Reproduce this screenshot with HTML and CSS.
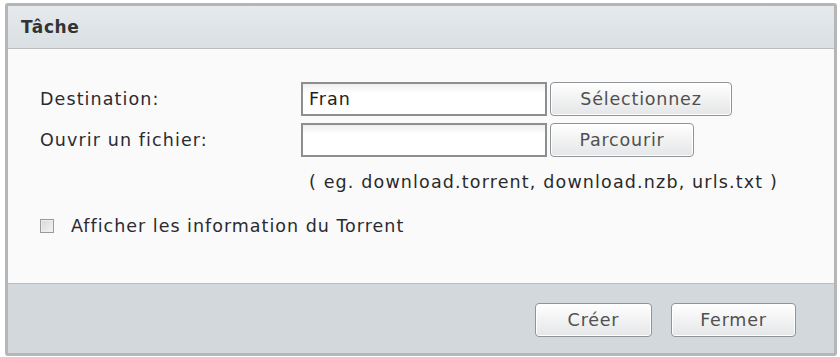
FILE: index.html
```html
<!DOCTYPE html>
<html lang="fr">
<head>
<meta charset="utf-8">
<link rel="stylesheet" href="styles.css">
</head>
<body>
<div class="dialog">
  <div class="header">Tâche</div>
  <div class="content">
    <div class="row">
      <label class="label">Destination:</label>
      <div class="field">Fran</div>
      <button class="btn btn-select">Sélectionnez</button>
    </div>
    <div class="row">
      <label class="label">Ouvrir un fichier:</label>
      <div class="field"></div>
      <button class="btn btn-browse">Parcourir</button>
    </div>
    <div class="hint">( eg. download.torrent, download.nzb, urls.txt )</div>
    <div class="check-row">
      <span class="checkbox"></span>
      <span class="check-label">Afficher les information du Torrent</span>
    </div>
  </div>
  <div class="footer">
    <button class="btn btn-create">Créer</button>
    <button class="btn btn-close">Fermer</button>
  </div>
</div>
</body>
</html>
```
FILE: styles.css
```css
html, body {
  margin: 0;
  padding: 0;
  background: #ffffff;
}
body {
  font-family: "DejaVu Sans", Verdana, sans-serif;
  font-size: 17.5px;
  color: #2a2a2a;
}
.dialog {
  margin: 3px 0 0 5px;
  width: 826px;
  height: 347px;
  border: 3px solid #b4b6b8;
  border-radius: 3px;
  display: flex;
  flex-direction: column;
  box-shadow: inset 1px 1px 0 #9a9c9e;
}
.header {
  height: 43px;
  box-sizing: border-box;
  border-bottom: 1px solid #b9bdc0;
  background: linear-gradient(#e6eaed, #dadfe3);
  padding-left: 13px;
  display: flex;
  align-items: center;
  font-weight: bold;
  font-size: 17px;
  letter-spacing: 0.6px;
  color: #333;
}
.content {
  height: 235px;
  box-sizing: border-box;
  background: #fafafa;
  border-bottom: 1px solid #b9bdc0;
  padding: 33px 0 0 32px;
}
.row {
  display: flex;
  align-items: center;
  height: 34px;
  margin-bottom: 7px;
}
.label {
  width: 261px;
  letter-spacing: 1.1px;
  color: #2a2a33;
}
.field {
  height: 30px;
  border: 2px solid #8e8e8e;
  background: linear-gradient(#eeeeee, #ffffff 30%);
  display: flex;
  align-items: center;
  padding-left: 6px;
  box-sizing: content-box;
  width: 236px;
  letter-spacing: 1px;
  color: #222;
}
.btn {
  font-family: "DejaVu Sans", Verdana, sans-serif;
  font-size: 17.5px;
  letter-spacing: 0.8px;
  color: #505050;
  border: 1px solid #8f9498;
  border-radius: 4px;
  background: linear-gradient(#ffffff, #f3f3f3 45%, #e4e6e8);
  box-shadow: inset 0 0 0 1px #ffffff;
  height: 34px;
  padding: 0;
  margin-left: 3px;
}
.btn-select { width: 182px; }
.btn-browse { width: 144px; }
.hint {
  margin: 15px 0 0 269px;
  letter-spacing: 1.15px;
  color: #2a2a2a;
  line-height: 20px;
}
.check-row {
  display: flex;
  align-items: center;
  margin-top: 24px;
}
.checkbox {
  width: 12px;
  height: 12px;
  border: 1px solid #9a9a9a;
  background: linear-gradient(135deg, #d8d8d8, #f4f4f4);
  box-shadow: inset 0 0 0 1px #eeeeee;
  margin-right: 17px;
}
.check-label {
  letter-spacing: 1px;
  color: #2a2a33;
}
.footer {
  flex: 1;
  background: #d3d8dc;
  display: flex;
  justify-content: flex-end;
  align-items: flex-start;
  padding: 19px 38px 0 0;
  gap: 16px;
}
.btn-create { width: 117px; }
.btn-close { width: 125px; }
```
